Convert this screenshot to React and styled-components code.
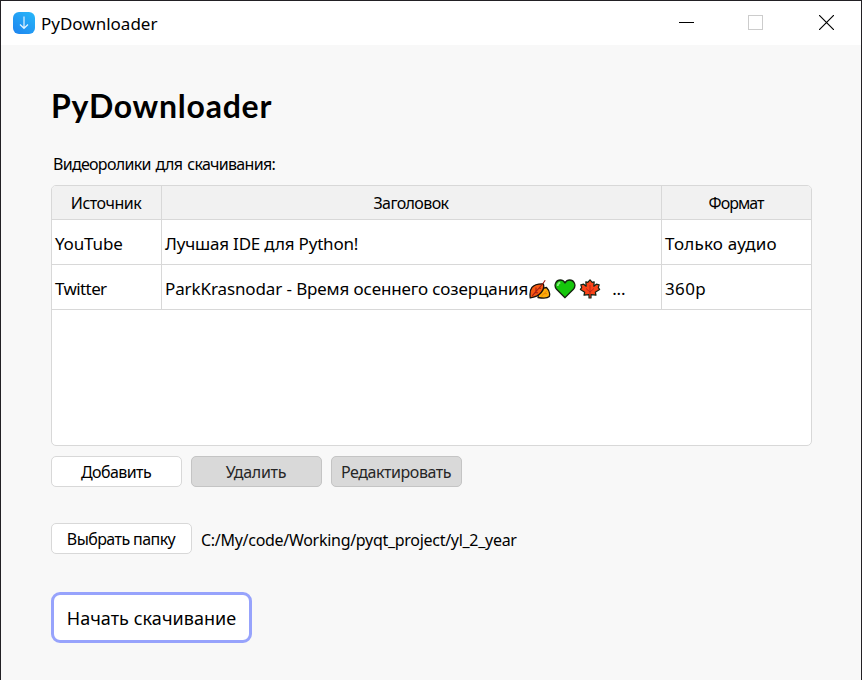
import React from "react";
import styled, { createGlobalStyle } from "styled-components";

const GlobalStyle = createGlobalStyle`
  * { box-sizing: border-box; }
  body { margin: 0; overflow: hidden; }
`;

const Window = styled.div`
  display: flex;
  flex-direction: column;
  width: 862px;
  height: 680px;
  border: 1px solid #222024;
  border-bottom: 0;
  background: #f8f8f8;
  color: #000;
  font: 16px "Noto Sans", "Segoe UI", sans-serif;
  white-space: nowrap;
`;

const TitleBar = styled.header`
  display: flex;
  align-items: center;
  height: 44px;
  padding: 0 27px 0 12px;
  background: #fff;
  svg { display: block; flex: none; }
`;

const WindowTitle = styled.div`
  margin: 1px auto 0 6px;
  font-size: 17px;
  line-height: 24px;
`;

const WindowControls = styled.div`
  display: flex;
  align-items: center;
  gap: 54px;
  margin-bottom: 1px;
  svg:last-child { margin-left: 2px; }
`;

const Content = styled.main`
  display: flex;
  flex-direction: column;
  align-items: flex-start;
  padding: 41px 50px 0;
`;

const Heading = styled.h1`
  margin: 0;
  font: 700 32px/40px Lato, sans-serif;
  letter-spacing: 0.75px;
`;

const Label = styled.div`
  margin: 26px 0 9px 2px;
  line-height: 24px;
  letter-spacing: -0.7px;
  word-spacing: 1.5px;
`;

const Table = styled.div`
  width: 761px;
  height: 261px;
  border: 1px solid #d8d8d8;
  border-radius: 5px;
  background: #fff;
  overflow: hidden;
`;

const Row = styled.div`
  display: grid;
  grid-template-columns: 110px 500px 149px;
  height: 45px;
  border-bottom: 1px solid #d8d8d8;
`;

const HeaderRow = styled(Row)`
  height: 34px;
  background: #f1f1f1;
`;

const Cell = styled.div`
  display: flex;
  align-items: center;
  padding: 2px 0 0 3px;
  border-right: 1px solid #d8d8d8;
  font-size: 17px;
  letter-spacing: ${(p) => p.$track}px;
  &:last-child { border-right: 0; }
`;

const HeaderCell = styled(Cell)`
  justify-content: center;
  padding: 1px 1px 0 0;
  font-size: 16px;
`;

const EmojiGroup = styled.span`
  display: flex;
  gap: 3px;
  margin: 2px 11px 0 1px;
  svg { display: block; }
`;

const Actions = styled.div`
  display: flex;
  gap: 9px;
  margin-top: 10px;
`;

const Button = styled.button`
  width: ${(p) => p.$width || 131}px;
  height: 31px;
  padding: 0 1px 0 0;
  border: 1px solid #d8d8d8;
  border-radius: 5px;
  background: #fff;
  color: #000;
  font: inherit;
  line-height: 28px;
  letter-spacing: ${(p) => p.$track}px;
  &:disabled {
    border-color: #c4c4c4;
    background: #d9d9d9;
    color: #262626;
  }
`;

const FolderRow = styled.div`
  display: flex;
  align-items: center;
  gap: 9px;
  margin-top: 36px;
`;

const FolderPath = styled.span`
  padding-top: 2px;
  letter-spacing: -0.29px;
`;

const StartButton = styled(Button)`
  height: 51px;
  margin-top: 38px;
  padding: 0;
  border: 3px solid #97a3fc;
  border-radius: 9px;
  font-size: 18px;
`;

const AppIcon = () => (
  <svg width="22" height="22" viewBox="0 0 22 22" fill="none">
    <defs>
      <linearGradient id="app" x1="1" y1="0" x2="0.2" y2="1">
        <stop stopColor="#27b8f9" />
        <stop offset="1" stopColor="#1f88f0" />
      </linearGradient>
    </defs>
    <rect width="22" height="22" rx="6" fill="url(#app)" />
    <path d="M11 4.5V16M7 12.5L11 16.3L15 12.5" stroke="#e2f4ff" strokeWidth="1.2" />
  </svg>
);

const Leaves = () => (
  <svg width="22" height="20" viewBox="0 0 22 20" stroke="#17120c" strokeLinejoin="round">
    <path d="M9 18.5C9 12 13 8.8 17.5 8.5C20 11 21.3 14.5 20.3 17.5C18.5 19.5 12 19 9 18.5Z" fill="#ffaf0a" strokeWidth="1.3" />
    <path d="M1.2 18.8C.2 10 2.5 4.5 14.2 4.8C16.5 10.5 11 17.5 1.2 18.8Z" fill="#f75a12" strokeWidth="1.3" />
    <path d="M3.2 16.8L14 4.5L16.2 1.2M7 12.5V8.5M9.8 9.3H12M6 13.8H9" fill="none" stroke="#a41b16" strokeWidth="1.1" />
    <path d="M12.5 17L17.8 12M15 14.7H18" fill="none" stroke="#ec820b" />
  </svg>
);

const Heart = () => (
  <svg width="22" height="20" viewBox="0 0 22 20">
    <path d="M11 18.7L2.6 10.3C-1 5.7 2.5 1 6.3 1C8.4 1 10 2.2 11 3.8C12 2.2 13.6 1 15.7 1C19.5 1 23 5.7 19.4 10.3Z" fill="#16c60c" stroke="#14220f" strokeWidth="1.3" />
    <path d="M3.7 7C3.7 5 4.7 4 6.2 3.6" fill="none" stroke="#8cec82" strokeWidth="1.7" />
  </svg>
);

const MapleLeaf = () => (
  <svg width="22" height="20" viewBox="0 0 22 20" strokeLinejoin="round">
    <path d="M11 .8L13.2 3.4L15.2 2.8L14.8 7.2L17.3 5.2L20.2 5.8L19.3 8.6L20.6 10.4L16.3 13.2L17 16.2L12 15.6V19H10V15.6L5 16.2L5.7 13.2L1.4 10.4L2.7 8.6L1.8 5.8L4.7 5.2L7.2 7.2L6.8 2.8L8.8 3.4Z" fill="#fa4418" stroke="#142313" strokeWidth="1.2" />
    <path d="M11 6V18.5M11 13L7 9.5M11 13L15 9.5" fill="none" stroke="#b5251a" strokeWidth=".9" />
  </svg>
);

const MinimizeIcon = () => (
  <svg width="15" height="15" shapeRendering="crispEdges">
    <path d="M0 7.5H15" stroke="#000" />
  </svg>
);

const MaximizeIcon = () => (
  <svg width="15" height="15">
    <rect x=".5" y=".5" width="14" height="14" fill="none" stroke="#ccc" />
  </svg>
);

const CloseIcon = () => (
  <svg width="15" height="15">
    <path d="M0 0L15 15M15 0L0 15" stroke="#000" strokeWidth="1.15" />
  </svg>
);

export default function App() {
  return (
    <>
      <GlobalStyle />
      <Window>
        <TitleBar>
          <AppIcon />
          <WindowTitle>PyDownloader</WindowTitle>
          <WindowControls>
            <MinimizeIcon />
            <MaximizeIcon />
            <CloseIcon />
          </WindowControls>
        </TitleBar>
        <Content>
          <Heading>PyDownloader</Heading>
          <Label>Видеоролики для скачивания:</Label>
          <Table>
            <HeaderRow>
              <HeaderCell $track={-0.5}>Источник</HeaderCell>
              <HeaderCell $track={-0.6}>Заголовок</HeaderCell>
              <HeaderCell $track={-1}>Формат</HeaderCell>
            </HeaderRow>
            <Row>
              <Cell $track={-0.15}>YouTube</Cell>
              <Cell $track={-0.19}>Лучшая IDE для Python!</Cell>
              <Cell $track={0.2}>Только аудио</Cell>
            </Row>
            <Row>
              <Cell $track={-0.6}>Twitter</Cell>
              <Cell $track={-0.11}>
                ParkKrasnodar - Время осеннего созерцания
                <EmojiGroup>
                  <Leaves />
                  <Heart />
                  <MapleLeaf />
                </EmojiGroup>
                ...
              </Cell>
              <Cell $track={0.35}>360p</Cell>
            </Row>
          </Table>
          <Actions>
            <Button $track={-0.57}>Добавить</Button>
            <Button $track={-0.27} disabled>Удалить</Button>
            <Button $track={-0.43} disabled>Редактировать</Button>
          </Actions>
          <FolderRow>
            <Button $width={141} $track={-0.58}>Выбрать папку</Button>
            <FolderPath>C:/My/code/Working/pyqt_project/yl_2_year</FolderPath>
          </FolderRow>
          <StartButton $width={201} $track={0.04}>Начать скачивание</StartButton>
        </Content>
      </Window>
    </>
  );
}
